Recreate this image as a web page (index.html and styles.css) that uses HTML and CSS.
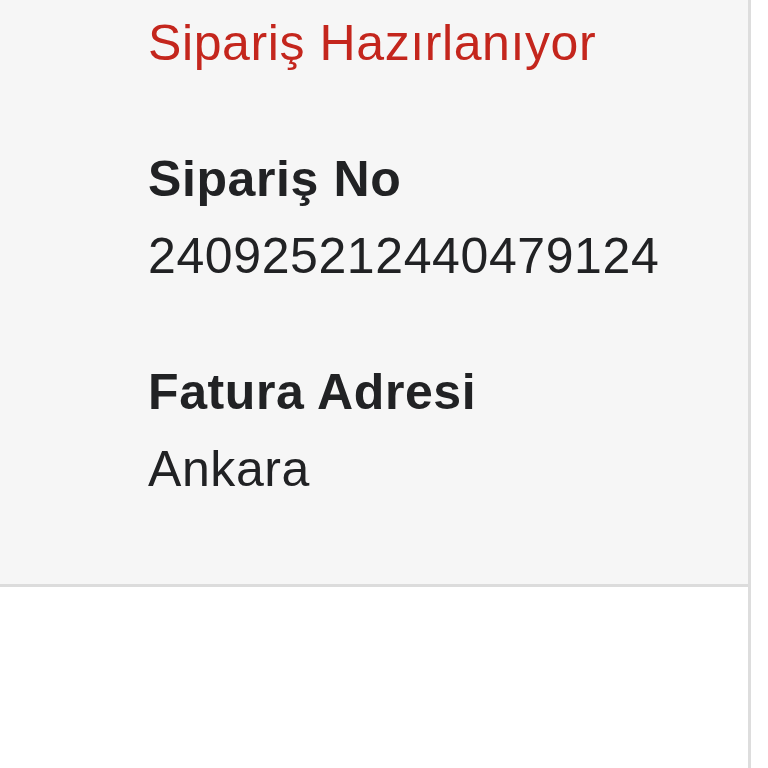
FILE: index.html
```html
<!DOCTYPE html>
<html lang="tr">
<head>
  <meta charset="UTF-8">
  <meta name="viewport" content="width=device-width, initial-scale=1.0">
  <title>Sipariş Detayı</title>
  <link rel="stylesheet" href="styles.css">
</head>
<body>

  <div class="page">
    <div class="order-box">
      <div class="order-status">Sipariş Hazırlanıyor</div>

      <div class="order-field">
        <div class="field-label">Sipariş No</div>
        <div class="field-value">240925212440479124</div>
      </div>

      <div class="order-field">
        <div class="field-label">Fatura Adresi</div>
        <div class="field-value">Ankara</div>
      </div>
    </div>
  </div>

</body>
</html>
```

FILE: styles.css
```css
body {
  font-family: 'Liberation Sans', Arial, sans-serif;
  margin: 0;
  background-color: #fff;
  color: #212224;
}

.page {
  width: 748px;
  min-height: 768px;
  border-right: 3px solid #dddddd;
}

.order-box {
  background-color: #f6f6f6;
  border-bottom: 3px solid #dcdcdc;
  padding: 5px 0 76px 148px;
  font-size: 50px;
  line-height: 77px;
  letter-spacing: 0.6px;
}

.order-status { color: #c4261d; }

.order-field { margin-top: 59px; }

.field-label { font-weight: bold; }
```
